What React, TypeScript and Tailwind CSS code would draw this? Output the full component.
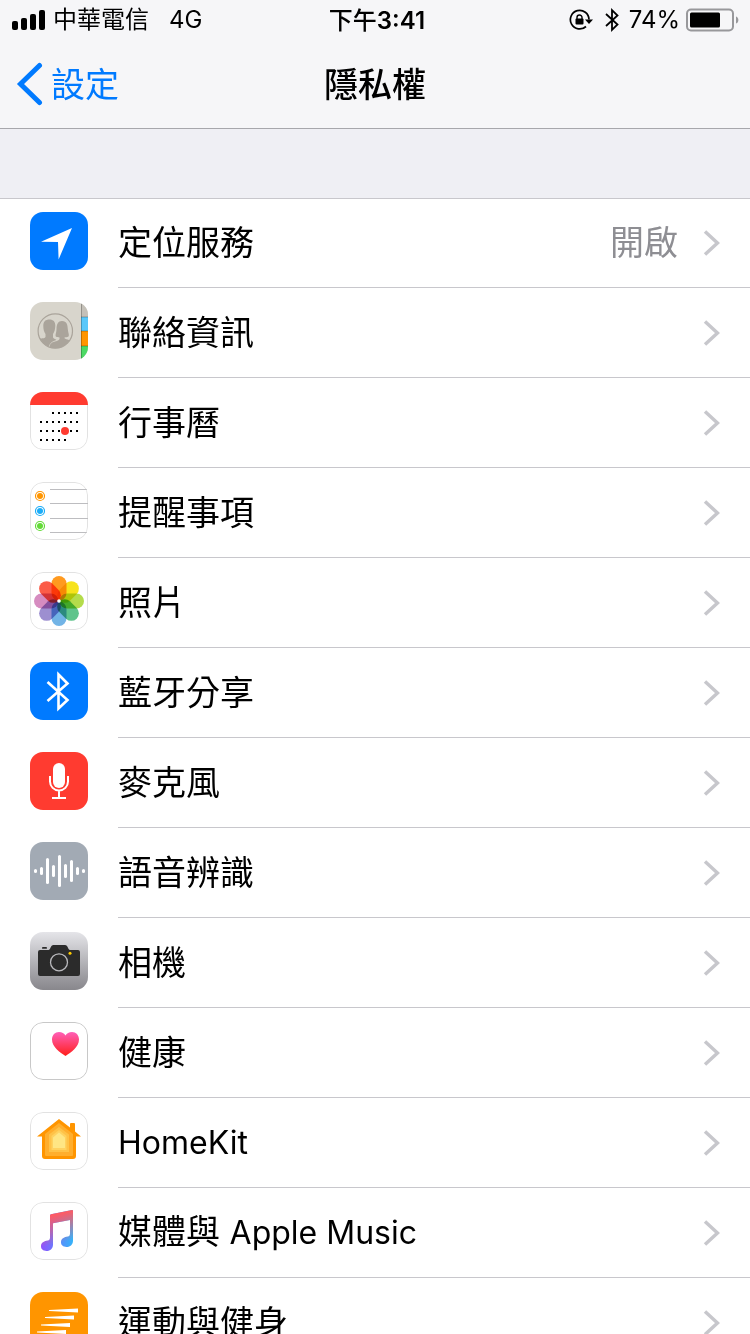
import type { ReactNode } from 'react'

const PETALS = ['#ff9a1f', '#f7e31c', '#b4dc4b', '#5fc48c', '#72b4e6', '#9d8fd0', '#d68cc0', '#fb5c48']

const CALENDAR_ROWS = [
  { y: 21, from: 2, to: 6 },
  { y: 30, from: 0, to: 6 },
  { y: 39, from: 0, to: 6 },
  { y: 48, from: 0, to: 4 },
]

const WAVE_BARS = [4, 8, 26, 12, 32, 14, 22, 8, 4]

function Tile({ className, children }: { className: string; children: ReactNode }) {
  return (
    <span className={`block size-[58px] shrink-0 mb-1 rounded-[13px] overflow-hidden ${className}`}>
      <svg viewBox="0 0 58 58" className="size-[58px]" fill="none" aria-hidden="true">
        {children}
      </svg>
    </span>
  )
}

// white tiles carry a hairline drawn inside the artwork so the content is not inset
function Outline({ color = '#e2e2e2' }: { color?: string }) {
  return <rect x="0.5" y="0.5" width="57" height="57" rx="12.5" stroke={color} />
}

function LocationIcon() {
  return (
    <Tile className="bg-[#007aff]">
      <path d="M42 16 11 29.7 28 30 28.6 47.5Z" fill="#fff" />
    </Tile>
  )
}

function ContactsIcon() {
  return (
    <Tile className="bg-[#d8d5cc]">
      <clipPath id="contacts-clip">
        <circle cx="25.3" cy="29" r="17.2" />
      </clipPath>
      <rect x="51" width="7" height="15" fill="#c4c0b8" />
      <rect x="51" y="15" width="7" height="14" fill="#5ac8fa" />
      <rect x="51" y="29" width="7" height="15" fill="#ff9500" />
      <rect x="51" y="44" width="7" height="14" fill="#4cd964" />
      <path d="M51.500 0V58M51 15H58M51 29H58M51 44H58" stroke="#000" strokeOpacity="0.25" />
      <circle cx="25.3" cy="29" r="17.2" stroke="#aaa49b" strokeWidth="1.2" />
      <g clipPath="url(#contacts-clip)" fill="#aaa49b">
        <path d="M19.500 17.500C23.500 17.500 25.500 20 25.300 24 25.200 27 24.500 30 23 32V35.500C24 37 26 37 26.500 38 22 39.500 19.500 41 18.500 46L6 42V37.500C9 36 14.500 37 15.500 35V32C14 30 13.300 27 13.300 24 13.300 19.500 15.500 17.500 19.500 17.500Z" />
        <path d="M32 19C37 19 37.500 23 37.800 27 38 30.500 39.500 32.500 38.500 34.500 37 35.500 35.500 35 34.500 35.500 34 38 41 37 44 41L38 48H19C19.500 42 21 40.500 25 39.500 28 38.700 30 38 29.500 35.500 28.500 35 27 35.500 25.800 34.500 25 32.500 26.500 31 26.500 27 26.700 22 28 19 32 19Z" />
      </g>
    </Tile>
  )
}

function CalendarIcon() {
  return (
    <Tile className="bg-white">
      <Outline />
      <rect width="58" height="13" fill="#ff3b30" />
      {CALENDAR_ROWS.map(({ y, from, to }) =>
        Array.from({ length: to - from + 1 }, (_, i) => (
          <rect key={`${y}-${i}`} x={10 + (from + i) * 6} y={y - 1} width="2" height="2" fill="#000" />
        ))
      )}
      <circle cx="35" cy="39" r="4" fill="#ff3b30" />
    </Tile>
  )
}

function RemindersIcon() {
  return (
    <Tile className="bg-white">
      <Outline />
      <path d="M20 7.500H57M20 21.500H58M20 36.500H58M20 50.500H57" stroke="#bdbdc0" />
      {['#ff9500', '#1badf8', '#63da38'].map((color, i) => (
        <g key={color}>
          <circle cx="10" cy={14 + i * 15} r="4.500" stroke={color} strokeWidth="1.200" />
          <circle cx="10" cy={14 + i * 15} r="3" fill={color} />
        </g>
      ))}
    </Tile>
  )
}

function PhotosIcon() {
  return (
    <Tile className="bg-white">
      <Outline />
      {PETALS.map((color, i) => (
        <rect
          key={color}
          x="21.500"
          y="4"
          width="15"
          height="24.500"
          rx="7.500"
          className="mix-blend-multiply"
          fill={color}
          transform={`rotate(${i * 45} 29 29)`}
        />
      ))}
      <circle cx="29" cy="29" r="1.800" fill="#fff" />
    </Tile>
  )
}

function BluetoothIcon() {
  return (
    <Tile className="bg-[#007aff]">
      <path d="M17.500 20 37.500 38 28.500 46.500V12.500L37.500 21.500 17.500 39" stroke="#fff" strokeWidth="2.600" />
    </Tile>
  )
}

function MicrophoneIcon() {
  return (
    <Tile className="bg-[#ff3b30]">
      <rect x="23" y="11" width="12" height="25" rx="6" fill="#fff" />
      <path d="M20 24V29.500a9 9 0 0 0 18 0V24M29 39V46M22 46H36" stroke="#fff" strokeWidth="2" />
    </Tile>
  )
}

function SpeechIcon() {
  return (
    <Tile className="bg-[#a2aab4]">
      {WAVE_BARS.map((height, i) => (
        <rect key={i} x={4 + i * 6} y={29 - height / 2} width="3" height={height} rx="1.500" fill="#fff" />
      ))}
    </Tile>
  )
}

function CameraIcon() {
  return (
    <Tile className="bg-linear-to-b from-[#e5e5e9] to-[#88878c]">
      <path
        d="M10 18H18.500C20.500 18 20.500 13 23.500 13H35C38 13 38 18 40 18H48a2 2 0 0 1 2 2V42a2 2 0 0 1-2 2H10a2 2 0 0 1-2-2V20a2 2 0 0 1 2-2Z"
        fill="#2b2b2b"
      />
      <rect x="12" y="15" width="5" height="1.800" rx="0.900" fill="#2b2b2b" />
      <circle cx="29" cy="30.300" r="8.500" stroke="#b9b9bd" strokeWidth="1.300" />
      <circle cx="40" cy="21.300" r="1.500" fill="#ffcc00" />
    </Tile>
  )
}

function HealthIcon() {
  return (
    <Tile className="bg-white">
      <linearGradient id="health-heart" x1="0" y1="10" x2="0" y2="34" gradientUnits="userSpaceOnUse">
        <stop stopColor="#ff5fb8" />
        <stop offset="1" stopColor="#ff1f1a" />
      </linearGradient>
      <Outline color="#c8c8c8" />
      <path
        d="M35.500 34C30 30.500 22 25 22 17.500 22 13 25 10 29 10c3 0 5.200 1.500 6.500 3.500C36.800 11.500 39 10 42 10c4 0 7 3 7 7.500C49 25 41 30.500 35.500 34Z"
        fill="url(#health-heart)"
      />
    </Tile>
  )
}

function HomeKitIcon() {
  return (
    <Tile className="bg-white">
      <Outline />
      <path
        d="M29 7 40 15.500V12a1 1 0 0 1 1-1H44a1 1 0 0 1 1 1V19.500L51 24.500H46V44a3 3 0 0 1-3 3H15a3 3 0 0 1-3-3V24.500H7Z"
        fill="#ff9500"
      />
      <path d="M29 11 43 22V43a1 1 0 0 1-1 1H16a1 1 0 0 1-1-1V22Z" fill="#ffae2d" />
      <path d="M29 15 39 22.500V40H19V22.500Z" fill="#ffc247" />
      <path d="M29 18 36.500 24V38H21.500V24Z" fill="#ffd260" />
      <path d="M29 20.500 35 25.500V36H23V25.500Z" fill="#ffe684" />
    </Tile>
  )
}

function MusicIcon() {
  return (
    <Tile className="bg-white">
      <linearGradient id="music-base" x1="11" y1="0" x2="43" y2="0" gradientUnits="userSpaceOnUse">
        <stop stopColor="#8f52ff" />
        <stop offset="1" stopColor="#35b4f8" />
      </linearGradient>
      <linearGradient id="music-top" x1="27" y1="12" x2="34" y2="40" gradientUnits="userSpaceOnUse">
        <stop stopColor="#ff5a63" />
        <stop offset="1" stopColor="#ff5a63" stopOpacity="0" />
      </linearGradient>
      <Outline />
      {['url(#music-base)', 'url(#music-top)'].map((fill) => (
        <path
          key={fill}
          d="M21 12.300 42 8.100a.9.900 0 0 1 1 .9V38.500C43 42.500 40.500 45 36.500 45 33 45 31 43 31 40.300 31 37 33.500 35.400 36.500 34.800 39 34.300 40 34 40 31.500V18L23 21.300V42.500C23 46.500 20.500 49 16.500 49 13 49 11 47 11 44.300 11 41 13.500 39.400 16.500 38.800 19 38.300 20 38 20 35.500V13.500A1.200 1.200 0 0 1 21 12.300Z"
          fill={fill}
        />
      ))}
    </Tile>
  )
}

function MotionIcon() {
  return (
    <Tile className="bg-[#ff9500]">
      <path
        d="M48 16.500V20.500L19 19V18ZM44 23.500V27.500L15 26V25ZM40 31V35L11 33.500V32.500ZM36 38V42L7 40.500V39.500Z"
        fill="#fff"
      />
    </Tile>
  )
}

const ITEMS: { label: string; latin?: string; icon: ReactNode; value?: string }[] = [
  { label: '定位服務', icon: <LocationIcon />, value: '開啟' },
  { label: '聯絡資訊', icon: <ContactsIcon /> },
  { label: '行事曆', icon: <CalendarIcon /> },
  { label: '提醒事項', icon: <RemindersIcon /> },
  { label: '照片', icon: <PhotosIcon /> },
  { label: '藍牙分享', icon: <BluetoothIcon /> },
  { label: '麥克風', icon: <MicrophoneIcon /> },
  { label: '語音辨識', icon: <SpeechIcon /> },
  { label: '相機', icon: <CameraIcon /> },
  { label: '健康', icon: <HealthIcon /> },
  { label: '', latin: 'HomeKit', icon: <HomeKitIcon /> },
  { label: '媒體與 ', latin: 'Apple Music', icon: <MusicIcon /> },
  { label: '運動與健身', icon: <MotionIcon /> },
]

function StatusBar() {
  return (
    <div className="grid grid-cols-[1fr_auto_1fr] items-center h-10 px-3 text-2xl">
      <div className="flex items-center">
        <svg viewBox="0 0 33 20" className="w-[33px] h-5 mr-2" aria-label="訊號強度">
          <rect y="11" width="6" height="9" rx="2" />
          <rect x="9" y="8" width="6" height="12" rx="2" />
          <rect x="18" y="4" width="6" height="16" rx="2" />
          <rect x="27" width="6" height="20" rx="2" />
        </svg>
        <span>中華電信</span>
        <span className="ml-5">4G</span>
      </div>
      <div className="pl-1 pt-0.5 font-medium">
        下午<span className="font-semibold">3:41</span>
      </div>
      <div className="flex items-center justify-end">
        <svg viewBox="0 0 24 22" className="w-6 h-[22px] mr-3" fill="none" stroke="#000" aria-label="方向鎖定">
          <path d="M17 17.500A9.300 9.300 0 1 1 20 10.500" strokeWidth="1.700" />
          <path d="M16 10.500H24L20 15Z" fill="#000" stroke="none" />
          <rect x="6.500" y="9.500" width="8" height="6" rx="1" fill="#000" stroke="none" />
          <path d="M8 10V8.500a2.500 2.500 0 0 1 5 0V10" strokeWidth="1.400" />
        </svg>
        <svg viewBox="0 0 14 24" className="w-3.5 h-6 mr-2.5" fill="none" stroke="#000" strokeWidth="1.800" aria-label="藍牙">
          <path d="M1 6 12.500 16.500 7 21.800V2.200L12.500 7.500 1 18" />
        </svg>
        <span className="mr-1.5">74%</span>
        <svg viewBox="0 0 53 24" className="w-[53px] h-6 -mr-px" aria-label="電池">
          <rect x="1" y="1.500" width="46" height="21" rx="4" fill="none" stroke="#98989b" strokeWidth="2" />
          <rect x="4" y="4.500" width="30" height="15" rx="1.500" />
          <path d="M50 8.500c3.200 1 3.200 6 0 7Z" fill="#98989b" />
        </svg>
      </div>
    </div>
  )
}

function NavBar() {
  return (
    <nav className="grid grid-cols-[1fr_auto_1fr] items-center h-22 px-4">
      <button type="button" className="flex items-center justify-self-start gap-2 text-[#007aff]">
        <svg viewBox="0 0 27 44" className="w-[27px] h-11" fill="none" aria-hidden="true">
          <path d="M23.500 3.500 4.500 22 23.500 40.500" stroke="currentColor" strokeWidth="5" strokeLinecap="round" />
        </svg>
        <span className="pt-0.5">設定</span>
      </button>
      <h1 className="pt-0.5 font-medium">隱私權</h1>
    </nav>
  )
}

function SettingsRow({ label, latin, icon, value }: { label: string; latin?: string; icon: ReactNode; value?: string }) {
  return (
    <li className="h-[90px] first:shadow-[inset_0_1px_#c8c7cc]">
      <button type="button" className="flex items-center gap-[30px] w-full h-full pl-[30px] text-left">
        {icon}
        <span className="flex flex-1 items-center h-full pr-[30px] border-b border-[#c8c7cc]">
          <span className="flex-1 whitespace-pre">
            {label}
            {latin && <span className="text-[32px]">{latin}</span>}
          </span>
          {value && <span className="mr-[25px] text-[#8e8e93]">{value}</span>}
          <svg viewBox="0 0 17 26" className="w-[17px] h-[26px]" fill="none" aria-hidden="true">
            <path d="M2 1.500 14.500 13 2 24.500" stroke="#c7c7cc" strokeWidth="3.500" />
          </svg>
        </span>
      </button>
    </li>
  )
}

export default function App() {
  return (
    <div className="flex flex-col h-screen bg-[#efeff4] text-black text-[34px] leading-10 font-[Inter,'Noto_Sans_CJK_TC',sans-serif]">
      <header className="shrink-0 bg-[#f6f6f8] border-b border-[#a7a7ac]">
        <StatusBar />
        <NavBar />
      </header>
      <main className="flex-1 overflow-y-auto pt-[69px] [scrollbar-width:none]">
        <ul className="bg-white">
          {ITEMS.map((item) => (
            <SettingsRow key={item.label + (item.latin ?? '')} {...item} />
          ))}
        </ul>
      </main>
    </div>
  )
}
